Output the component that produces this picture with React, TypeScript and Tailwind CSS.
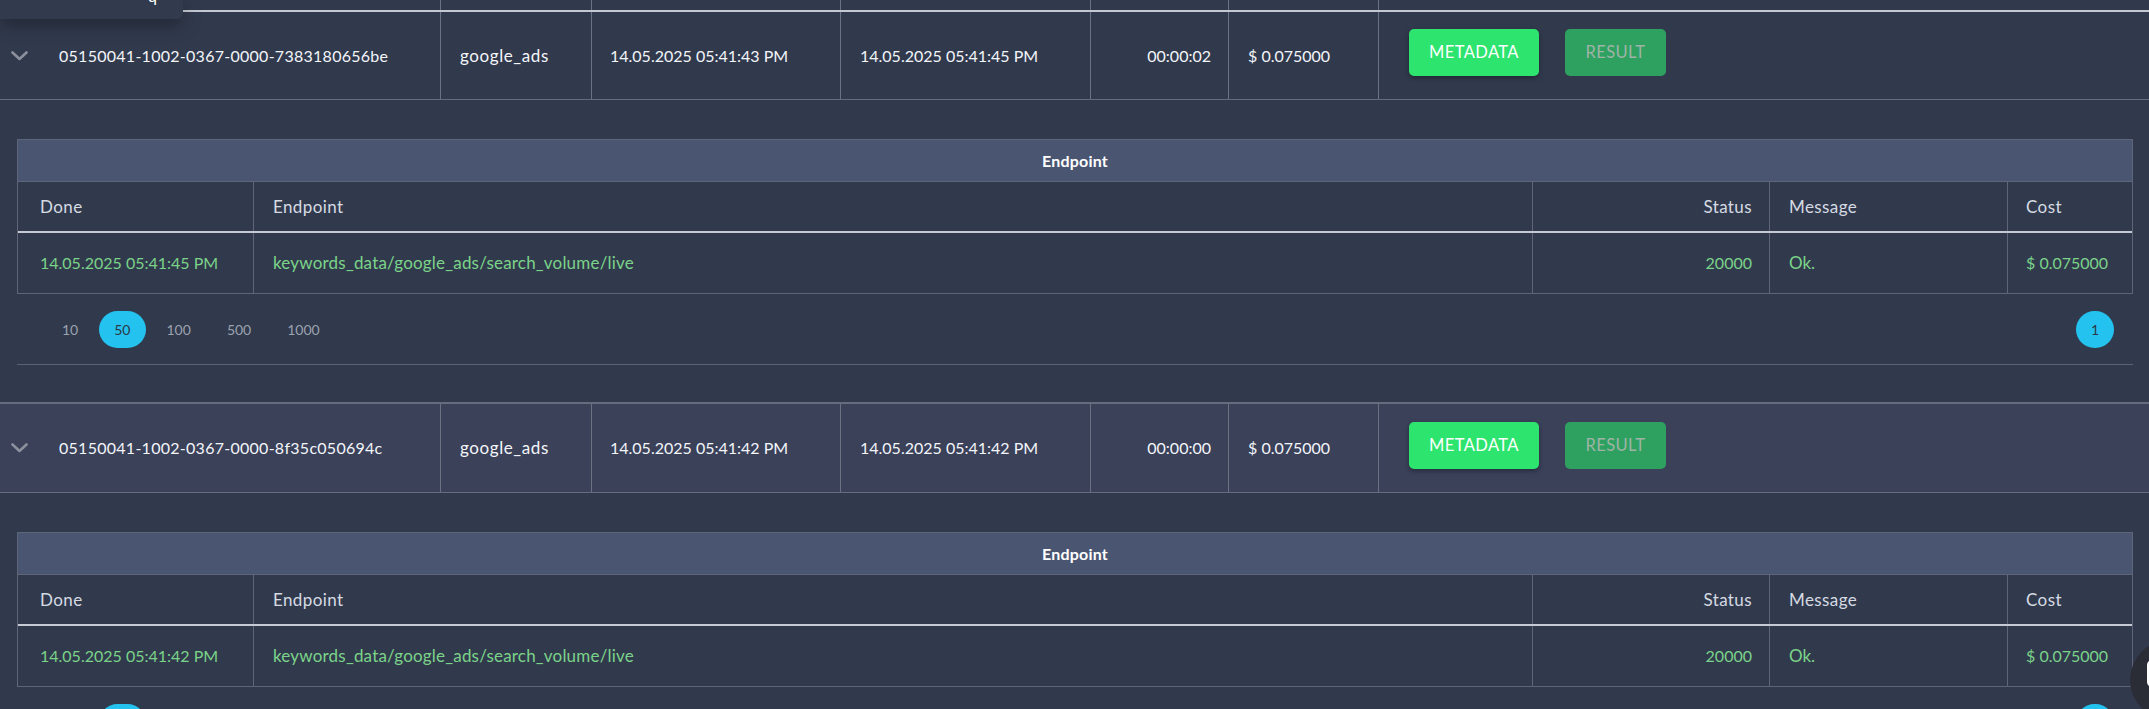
import React from "react";

type Task = {
  id: string;
  start: string;
  end: string;
  dur: string;
  done: string;
};

const tasks: Task[] = [
  {
    id: "05150041-1002-0367-0000-7383180656be",
    start: "14.05.2025 05:41:43 PM",
    end: "14.05.2025 05:41:45 PM",
    dur: "00:00:02",
    done: "14.05.2025 05:41:45 PM",
  },
  {
    id: "05150041-1002-0367-0000-8f35c050694c",
    start: "14.05.2025 05:41:42 PM",
    end: "14.05.2025 05:41:42 PM",
    dur: "00:00:00",
    done: "14.05.2025 05:41:42 PM",
  },
];

const cols = "grid grid-cols-[441px_151px_249px_250px_138px_150px_1fr]";
const innerCols = "grid grid-cols-[236px_1279px_237px_238px_1fr]";

function Chevron() {
  return (
    <svg width="17" height="10" viewBox="0 0 17 10" fill="none">
      <polyline points="1.5,1.5 8.5,8 15.5,1.5" stroke="#8b909c" strokeWidth="2.6" strokeLinecap="round" strokeLinejoin="round" />
    </svg>
  );
}

function MainRow({ t, hover, first }: { t: Task; hover?: boolean; first?: boolean }) {
  return (
    <div
      className={`${cols} ${first ? "h-[88px]" : "h-[90px] border-t"} border-b border-[#656c7d] text-[16px] text-[#f3f5f9] ${hover ? "bg-[#3a4159]" : ""}`}
    >
      <div className="flex items-center border-r border-[#6b7282]">
        <span className="flex w-[38px] justify-center">
          <Chevron />
        </span>
        <span className="ml-[21px] tracking-[0.27px]">{t.id}</span>
      </div>
      <div className="flex items-center border-r border-[#6b7282] pl-[19px] text-[17px] tracking-[0.6px]">google_ads</div>
      <div className="flex items-center border-r border-[#6b7282] pl-[18px]">{t.start}</div>
      <div className="flex items-center border-r border-[#6b7282] pl-[19px]">{t.end}</div>
      <div className="flex items-center justify-end border-r border-[#6b7282] pr-[17px]">{t.dur}</div>
      <div className="flex items-center border-r border-[#6b7282] pl-[19px]">$ 0.075000</div>
      <div className="flex items-center gap-[26px] pb-[6px] pl-[30px] text-[16.5px] tracking-[0.4px]">
        <button className="h-[47px] w-[130px] rounded-[5px] bg-[#2de46e] text-white shadow-[0_2px_5px_rgba(0,0,0,0.35)]">
          METADATA
        </button>
        <button className="h-[47px] w-[101px] rounded-[5px] bg-[#2ea161] text-[#9fb3a6]">
          RESULT
        </button>
      </div>
    </div>
  );
}

function Details({ t }: { t: Task }) {
  return (
    <div className="border-b border-[#656c7d] pb-[37px] pl-[17px] pr-[16px] pt-[39px]">
      <div className="border-x border-t border-[#5e6578]">
        <div className="flex h-[42px] items-center justify-center border-b border-[#5e6578] bg-[#4a5572] text-[16px] font-bold tracking-[0.2px] text-white">
          Endpoint
        </div>
        <div className={`${innerCols} h-[51px] border-b-2 border-[#c6cad4] text-[17px] tracking-[0.4px] text-[#d6dae3]`}>
          <div className="flex items-center border-r border-[#5e6578] pl-[22px]">Done</div>
          <div className="flex items-center border-r border-[#5e6578] pl-[19px]">Endpoint</div>
          <div className="flex items-center justify-end border-r border-[#5e6578] pr-[17px]">Status</div>
          <div className="flex items-center border-r border-[#5e6578] pl-[19px]">Message</div>
          <div className="flex items-center pl-[18px]">Cost</div>
        </div>
        <div className={`${innerCols} h-[61px] border-b border-[#5e6578] text-[16px] text-[#7bd389]`}>
          <div className="flex items-center border-r border-[#5e6578] pl-[22px]">{t.done}</div>
          <div className="flex items-center border-r border-[#5e6578] pl-[19px] text-[17px] tracking-[0.2px]">
            keywords_data/google_ads/search_volume/live
          </div>
          <div className="flex items-center justify-end border-r border-[#5e6578] pr-[17px]">20000</div>
          <div className="flex items-center border-r border-[#5e6578] pl-[19px] text-[17px]">Ok.</div>
          <div className="flex items-center pl-[18px]">$ 0.075000</div>
        </div>
      </div>
      <div className="flex h-[71px] items-center justify-between border-b border-[#5b6275] text-[14px]">
        <div className="flex items-center gap-[6px] pl-[30px]">
          {["10", "50", "100", "500", "1000"].map((n) => (
            <span
              key={n}
              className={`flex h-[37px] items-center rounded-full px-[15px] ${n === "50" ? "bg-[#23c2ef] text-[#2d3749]" : "text-[#9ba1ae]"}`}
            >
              {n}
            </span>
          ))}
        </div>
        <span className="mr-[19px] flex h-[37px] w-[38px] items-center justify-center rounded-full bg-[#23c2ef] text-[#2d3749]">
          1
        </span>
      </div>
    </div>
  );
}

export default function App() {
  return (
    <div className="relative h-[709px] w-[2149px] overflow-hidden bg-[#313a4d] font-[Lato,sans-serif]">
      {/* header remnant */}
      <div className={`${cols} h-[12px] border-b-2 border-[#c4c8d2]`}>
        {[0, 1, 2, 3, 4, 5].map((i) => (
          <div key={i} className="border-r border-[#6b7282]" />
        ))}
        <div />
      </div>

      <MainRow t={tasks[0]} first />
      <Details t={tasks[0]} />
      <MainRow t={tasks[1]} hover />
      <Details t={tasks[1]} />

      {/* dropdown shadow at top-left */}
      <div className="absolute left-0 top-0 h-[19px] w-[183px] overflow-hidden rounded-br-[6px] bg-[#323a4e] shadow-[0_6px_18px_rgba(0,0,0,0.35)]">
        <span className="absolute left-[148px] top-[-16px] text-[16px] text-white">q</span>
      </div>

      {/* floating chat button */}
      <div className="absolute left-[2130px] top-[640px] h-[80px] w-[80px] rounded-full bg-[#2a2d36]">
        <div className="absolute left-[17px] top-[20px] h-[27px] w-[22px] rounded-[5px] bg-white" />
      </div>
    </div>
  );
}
